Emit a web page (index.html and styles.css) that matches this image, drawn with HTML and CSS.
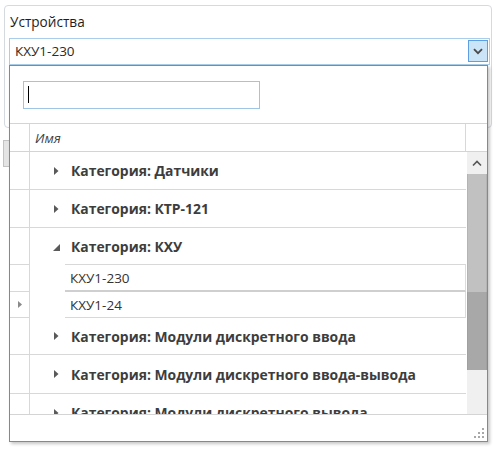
FILE: index.html
```html
<!DOCTYPE html>
<html lang="ru">
<head>
<meta charset="utf-8">
<title>Устройства</title>
<link rel="stylesheet" href="styles.css">
</head>
<body>
<div class="card">
  <div class="label">Устройства</div>
  <div class="combo">
    <span class="combo-text">КХУ1-230</span>
    <span class="combo-btn">
      <svg width="10" height="7" viewBox="0 0 10 7"><path d="M1 1.2 L5 5.2 L9 1.2" fill="none" stroke="#4a4a4a" stroke-width="1.8"/></svg>
    </span>
  </div>
</div>
<div class="behind"></div>

<div class="popup">
  <div class="search">
    <div class="search-input"><span class="caret"></span></div>
  </div>
  <div class="grid">
    <div class="head">
      <div class="rh"></div>
      <div class="head-main">Имя</div>
      <div class="head-sb"></div>
    </div>
    <div class="body">
      <div class="rows">
        <div class="row grp">
          <div class="rh"></div>
          <div class="main"><svg class="tri" width="5" height="8" viewBox="0 0 5 8"><path d="M0 0 L4.5 4 L0 8 Z" fill="#5a5a5a"/></svg><span class="gtext">Категория: Датчики</span></div>
        </div>
        <div class="row grp">
          <div class="rh"></div>
          <div class="main"><svg class="tri" width="5" height="8" viewBox="0 0 5 8"><path d="M0 0 L4.5 4 L0 8 Z" fill="#5a5a5a"/></svg><span class="gtext">Категория: КТР-121</span></div>
        </div>
        <div class="row grp open">
          <div class="rh"></div>
          <div class="indent"><svg class="tri-open" width="7" height="7" viewBox="0 0 7 7"><path d="M7 0 L7 7 L0 7 Z" fill="#5a5a5a"/></svg><span class="gtext">Категория: КХУ</span></div>
          <div class="main child-line"></div>
        </div>
        <div class="row item first">
          <div class="rh"></div>
          <div class="gap"></div>
          <div class="main"><span class="itext">КХУ1-230</span></div>
        </div>
        <div class="row item current">
          <div class="rh"><svg width="4" height="7" viewBox="0 0 4 7"><path d="M0 0 L4 3.5 L0 7 Z" fill="#8a8a8a"/></svg></div>
          <div class="gap"></div>
          <div class="main"><span class="itext">КХУ1-24</span></div>
        </div>
        <div class="row grp short">
          <div class="rh"></div>
          <div class="main"><svg class="tri" width="5" height="8" viewBox="0 0 5 8"><path d="M0 0 L4.5 4 L0 8 Z" fill="#5a5a5a"/></svg><span class="gtext">Категория: Модули дискретного ввода</span></div>
        </div>
        <div class="row grp tall">
          <div class="rh"></div>
          <div class="main"><svg class="tri" width="5" height="8" viewBox="0 0 5 8"><path d="M0 0 L4.5 4 L0 8 Z" fill="#5a5a5a"/></svg><span class="gtext">Категория: Модули дискретного ввода-вывода</span></div>
        </div>
        <div class="row grp">
          <div class="rh"></div>
          <div class="main"><svg class="tri" width="5" height="8" viewBox="0 0 5 8"><path d="M0 0 L4.5 4 L0 8 Z" fill="#5a5a5a"/></svg><span class="gtext">Категория: Модули дискретного вывода</span></div>
        </div>
      </div>
      <div class="sb">
        <div class="sb-up"><svg width="10" height="7" viewBox="0 0 10 7"><path d="M1 5.5 L5 1.5 L9 5.5" fill="none" stroke="#555" stroke-width="1.6"/></svg></div>
        <div class="sb-hi"></div>
        <div class="sb-thumb"></div>
        <div class="sb-track"></div>
      </div>
    </div>
  </div>
  <div class="footer">
    <svg class="grip" width="10" height="10" viewBox="0 0 10 10">
      <rect x="8" y="0" width="2" height="2" fill="#a8a8a8"/>
      <rect x="4" y="4" width="2" height="2" fill="#a8a8a8"/>
      <rect x="8" y="4" width="2" height="2" fill="#a8a8a8"/>
      <rect x="0" y="8" width="2" height="2" fill="#a8a8a8"/>
      <rect x="4" y="8" width="2" height="2" fill="#a8a8a8"/>
      <rect x="8" y="8" width="2" height="2" fill="#a8a8a8"/>
    </svg>
  </div>
</div>
</body>
</html>
```

FILE: styles.css
```css
html, body {
  margin: 0;
  padding: 0;
  background: #ffffff;
}
body {
  font-family: "Open Sans", "Noto Sans", sans-serif;
  font-size: 13.5px;
  color: #333333;
  position: relative;
  width: 500px;
  height: 449px;
  overflow: hidden;
}
.card {
  box-sizing: border-box;
  margin: 5px 0 0 4px;
  width: 488px;
  height: 123px;
  border: 1px solid #d5dae1;
  border-radius: 4px;
  padding: 7px 1px 0 4px;
}
.label {
  line-height: 18px;
  padding-left: 1px;
  color: #1e1e1e;
  font-size: 13.6px;
}
.combo {
  margin-top: 7px;
  box-sizing: border-box;
  height: 27px;
  border: 1px solid #a9cdea;
  display: flex;
  align-items: flex-start;
  justify-content: space-between;
}
.combo-text {
  line-height: 25px;
  padding-left: 5px;
  color: #2b2b2b;
}
.combo-btn {
  box-sizing: border-box;
  width: 20px;
  height: 22px;
  margin: 1px 1px 0 0;
  border: 1px solid #5d9fe0;
  background: #cce4f7;
  display: flex;
  align-items: center;
  justify-content: center;
}
.behind {
  margin: 12px 0 0 3px;
  width: 30px;
  height: 27px;
  box-sizing: border-box;
  border: 1px solid #c3c3c3;
  background: #e4e4e4;
}
.popup {
  position: absolute;
  left: 9px;
  top: 65px;
  width: 479px;
  height: 377px;
  box-sizing: border-box;
  border: 1px solid #848990;
  background: #ffffff;
  box-shadow: 2px 2px 3px rgba(0, 0, 0, 0.22);
  display: flex;
  flex-direction: column;
}
.search {
  flex: none;
  height: 57px;
  box-sizing: border-box;
  padding: 15px 0 0 13px;
}
.search-input {
  box-sizing: border-box;
  width: 237px;
  height: 28px;
  border: 1px solid #9ec5e6;
  padding: 4px 0 0 4px;
}
.caret {
  display: block;
  width: 1px;
  height: 17px;
  background: #000;
}
.grid {
  flex: none;
  border-top: 1px solid #d4d4d4;
  display: flex;
  flex-direction: column;
}
.head {
  flex: none;
  display: flex;
  height: 28px;
  box-sizing: border-box;
  border-bottom: 1px solid #d4d4d4;
}
.head .rh {
  border-bottom: none;
}
.rh {
  width: 19px;
  flex: none;
  border-right: 1px solid #d8d8d8;
  border-bottom: 1px solid #d8d8d8;
  display: flex;
  align-items: center;
  justify-content: center;
}
.head-main {
  width: 436px;
  flex: none;
  border-right: 1px solid #d8d8d8;
  font-style: italic;
  color: #444444;
  padding-left: 5px;
  box-sizing: border-box;
  display: flex;
  align-items: center;
}
.head-sb {
  flex: 1;
}
.body {
  flex: none;
  height: 262px;
  display: flex;
  overflow: hidden;
}
.rows {
  width: 456px;
  flex: none;
  margin-right: 1px;
  overflow: hidden;
}
.row {
  display: flex;
  height: 38px;
}
.row.open { height: 37px; }
.row.item.first { height: 27px; }
.row.item.current { height: 26px; }
.row.short { height: 37px; }
.row.tall { height: 39px; }
.main {
  flex: 1;
  box-sizing: border-box;
  border-bottom: 1px solid #d8d8d8;
  display: flex;
  align-items: center;
  padding-left: 24px;
  white-space: nowrap;
}
.tri {
  flex: none;
  margin-right: 12px;
}
.gtext {
  font-weight: 700;
  font-size: 13.9px;
  color: #3d3d3d;
}
.indent {
  width: 35px;
  flex: none;
  display: flex;
  align-items: center;
  white-space: nowrap;
  padding-left: 23px;
  box-sizing: border-box;
  overflow: visible;
}
.tri-open {
  flex: none;
  margin-right: 11px;
  margin-top: 2px;
}
.child-line {
  padding-left: 0;
}
.gap {
  width: 35px;
  flex: none;
}
.item .main {
  padding-left: 5px;
  border-right: 1px solid #dcdcdc;
}
.item.first .main {
  border-bottom: 2px solid #cfcfcf;
}
.itext {
  color: #333333;
}
.sb {
  width: 20px;
  flex: none;
  background: #f0f0f0;
  display: flex;
  flex-direction: column;
}
.sb-up {
  flex: none;
  height: 22px;
  display: flex;
  align-items: center;
  justify-content: center;
}
.sb-hi {
  flex: none;
  height: 118px;
  box-sizing: border-box;
  background: #c1c1c1;
  border-left: 1px solid #b4b4b4;
  border-right: 1px solid #b4b4b4;
}
.sb-thumb {
  flex: none;
  height: 78px;
  box-sizing: border-box;
  background: #a8a8a8;
  border-left: 1px solid #a0a0a0;
  border-right: 1px solid #a0a0a0;
}
.sb-track {
  flex: 1;
}
.footer {
  flex: 1;
  border-top: 1px solid #d4d4d4;
  display: flex;
  justify-content: flex-end;
  align-items: flex-end;
  padding: 0 3px 3px 0;
}
```
